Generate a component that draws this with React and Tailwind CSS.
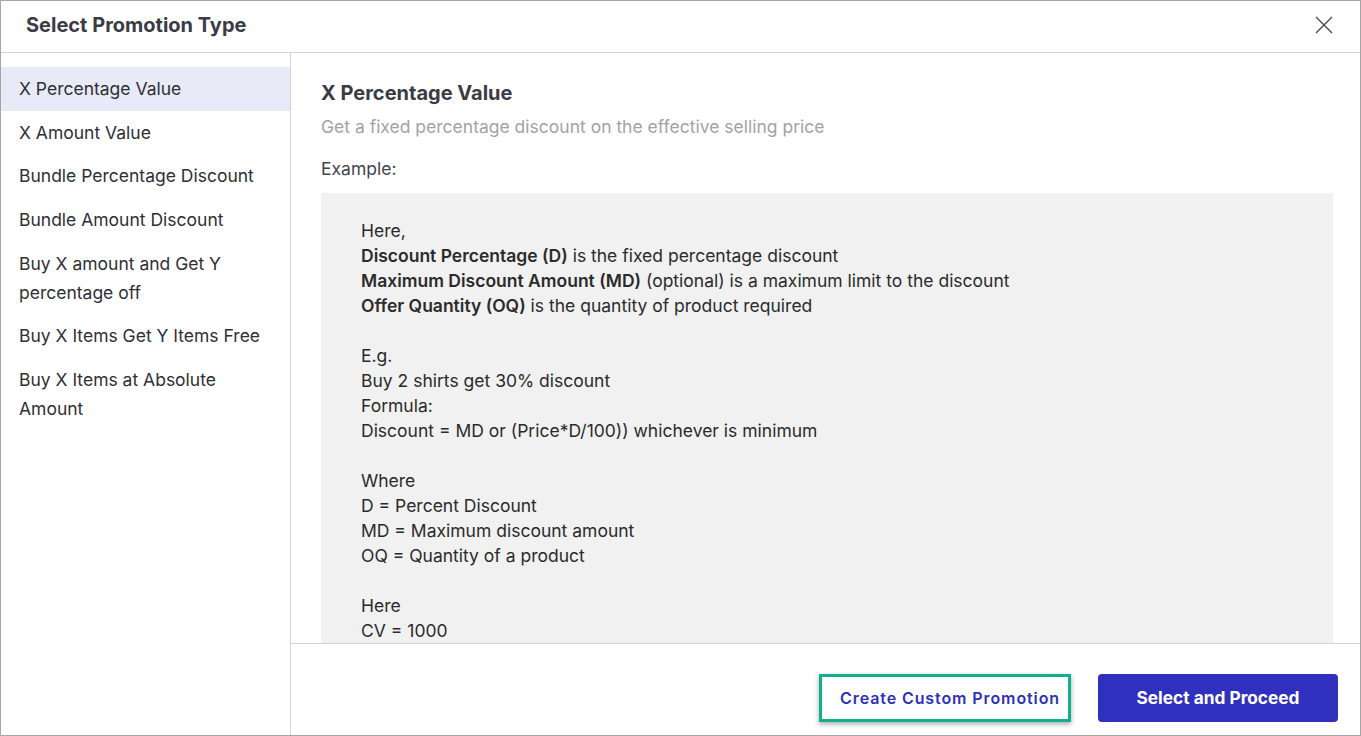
const items = [
  "X Percentage Value",
  "X Amount Value",
  "Bundle Percentage Discount",
  "Bundle Amount Discount",
  "Buy X amount and Get Y percentage off",
  "Buy X Items Get Y Items Free",
  "Buy X Items at Absolute Amount",
];

function Line({ children }) {
  return <div className="h-[25px]">{children}</div>;
}

export default function App() {
  return (
    <div className="w-[1361px] h-[736px] bg-white border border-[#a6a6a6] flex flex-col overflow-hidden text-[#2b2b33]" style={{ fontFamily: "Inter, 'Noto Sans', sans-serif" }}>
      {/* header */}
      <div className="h-[52px] shrink-0 border-b border-[#d4d4d4] flex items-center justify-between pl-[25px] pr-[26px] pb-[4px]">
        <h1 className="text-[20px] font-bold text-[#3a3b45]">Select Promotion Type</h1>
        <button className="w-5 h-5 flex items-center justify-center text-[#4a4a52]">
          <svg width="20" height="20" viewBox="0 0 20 20" fill="none" stroke="currentColor" strokeWidth="1.4">
            <path d="M2 2 L18 18 M18 2 L2 18" />
          </svg>
        </button>
      </div>

      <div className="flex flex-1 min-h-0">
        {/* sidebar */}
        <div className="w-[290px] shrink-0 border-r border-[#d4d4d4] pt-[14px]">
          {items.map((t, i) => (
            <div
              key={t}
              className={`pl-[18px] pr-6 py-[7.3px] text-[17.5px] leading-[29px] text-[#2f2f36] ${i === 0 ? "bg-[#e9eaf8]" : ""}`}
            >
              {t}
            </div>
          ))}
        </div>

        {/* main */}
        <div className="flex-1 flex flex-col min-w-0">
          <div className="flex-1 min-h-0 overflow-hidden pl-[30px] pr-[27px] pt-[27px]">
            <h2 className="text-[20px] font-bold text-[#3a3b45] leading-[26px]">X Percentage Value</h2>
            <p className="text-[17.5px] text-[#a3a3a3] mt-[8px] leading-[26px]">
              Get a fixed percentage discount on the effective selling price
            </p>
            <p className="text-[17.5px] text-[#43444d] mt-[16px] leading-[26px]">Example:</p>
            <div className="mt-[11px] bg-[#f1f1f1] pl-10 pt-[25px] pb-10 text-[17.5px] text-[#2b2b2b] leading-[25px]">
              <Line>Here,</Line>
              <Line><b className="font-semibold">Discount Percentage (D)</b> is the fixed percentage discount</Line>
              <Line><b className="font-semibold">Maximum Discount Amount (MD)</b> (optional) is a maximum limit to the discount</Line>
              <Line><b className="font-semibold">Offer Quantity (OQ)</b> is the quantity of product required</Line>
              <Line></Line>
              <Line>E.g.</Line>
              <Line>Buy 2 shirts get 30% discount</Line>
              <Line>Formula:</Line>
              <Line>Discount = MD or (Price*D/100)) whichever is minimum</Line>
              <Line></Line>
              <Line>Where</Line>
              <Line>D = Percent Discount</Line>
              <Line>MD = Maximum discount amount</Line>
              <Line>OQ = Quantity of a product</Line>
              <Line></Line>
              <Line>Here</Line>
              <Line>CV = 1000</Line>
            </div>
          </div>

          {/* footer */}
          <div className="h-[92px] shrink-0 border-t border-[#d4d4d4] flex items-center justify-end gap-[27px] pr-[22px] pt-[17px]">
            <button className="h-[48px] pl-[18px] pr-[8px] border-[3px] border-[#10b08f] shadow-[0_2px_5px_rgba(0,0,0,0.35)] text-[16px] font-semibold text-[#2e31b8] tracking-[0.9px]">
              Create Custom Promotion
            </button>
            <button className="h-[48px] w-[240px] rounded-[4px] bg-[#2f30bd] text-white text-[17.3px] font-bold">
              Select and Proceed
            </button>
          </div>
        </div>
      </div>
    </div>
  );
}
